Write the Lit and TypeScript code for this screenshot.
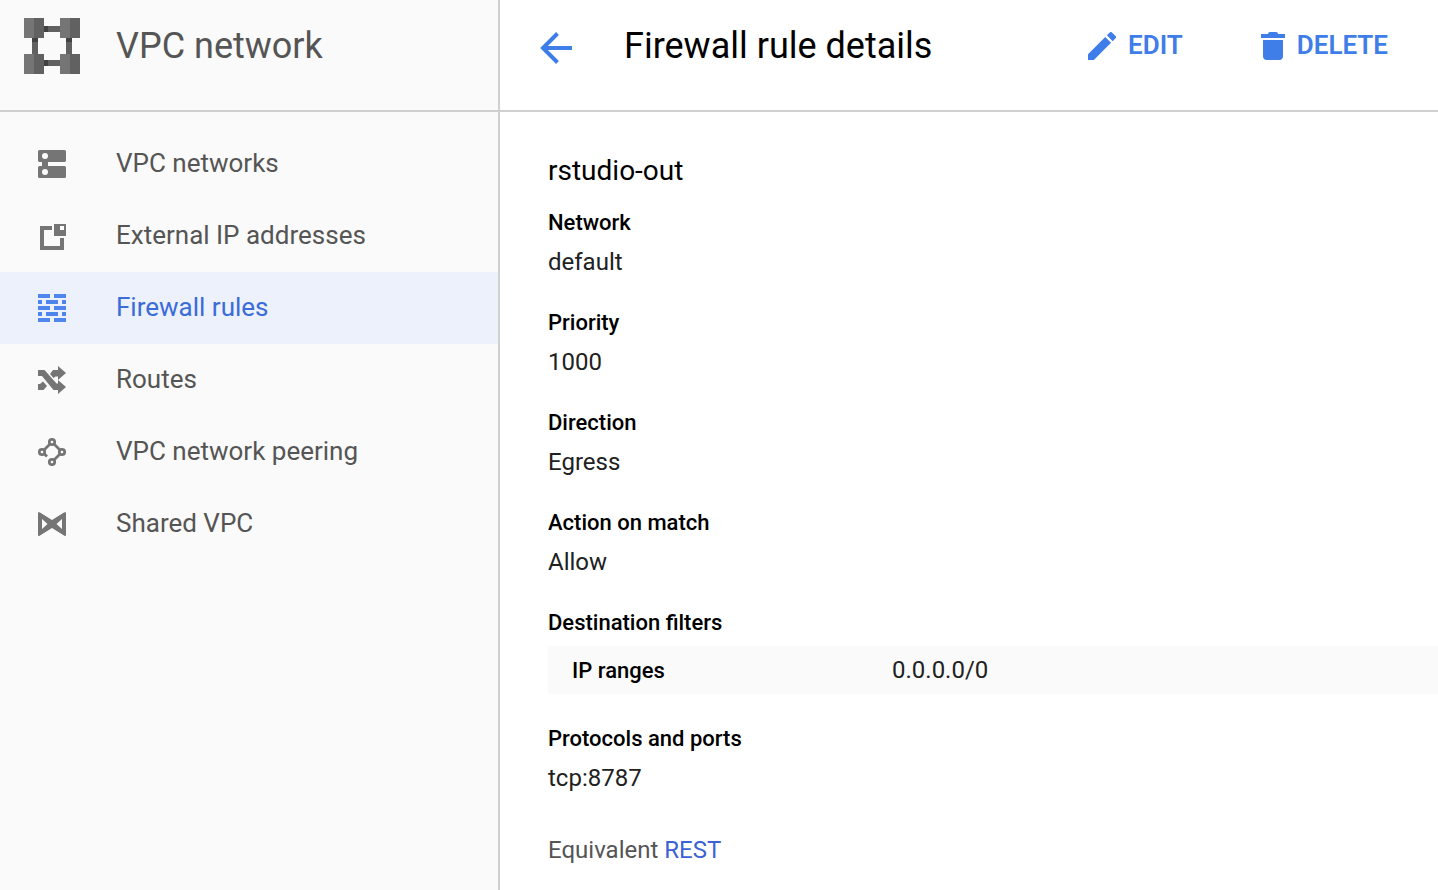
import { LitElement, html, css, svg } from "lit";
import { customElement, state } from "lit/decorators.js";

const navItems = [
  {
    label: "VPC networks",
    icon: svg`<path fill-rule="evenodd" d="M1.5 0h25A1.5 1.5 0 0 1 28 1.500v9a1.500 1.500 0 0 1-1.500 1.500H10v4h16.500A1.500 1.500 0 0 1 28 17.500v9a1.500 1.500 0 0 1-1.500 1.500h-25A1.500 1.500 0 0 1 0 26.500v-9A1.500 1.500 0 0 1 1.500 16H4v-4H1.500A1.500 1.500 0 0 1 0 10.500v-9A1.500 1.500 0 0 1 1.500 0zM7 3a3 3 0 1 0 0 6a3 3 0 0 0 0-6zM7 19a3 3 0 1 0 0 6a3 3 0 0 0 0-6z"/>`,
  },
  {
    label: "External IP addresses",
    icon: svg`<path fill-rule="evenodd" d="M2 4h12v4H6v16h16v-8h4v12H2zM16 2h12v12H16zM22 4v4h4V4z"/>`,
  },
  {
    label: "Firewall rules",
    icon: svg`<path d="M0 0h12v4H0zM16 0h12v4H16zM0 6h4v4H0zM8 6h12v4H8zM24 6h4v4h-4zM0 12h12v4H0zM16 12h12v4H16zM0 18h4v4H0zM8 18h12v4H8zM24 18h4v4h-4zM0 24h12v4H0zM16 24h12v4H16z"/>`,
  },
  {
    label: "Routes",
    icon: svg`<path d="M0 4h6.500L18.500 17.500H20V14L28 21l-8 7v-4h-4.500L4 10H0zM20 0l8 7l-8 7v-3.500h-2.500L15.500 12L12 8l3-4h5zM0 18h2L5 15.500L9 20L5.500 24H0z"/>`,
  },
  {
    label: "VPC network peering",
    icon: svg`<g fill="none" stroke="currentColor" stroke-width="2.700"><circle cx="14" cy="4" r="2.700"/><circle cx="4" cy="14" r="2.700"/><circle cx="24" cy="14" r="2.700"/><circle cx="14" cy="24" r="2.700"/><path d="M6 12l6-6M16 6l6 6M22 16l-6 6M6 15.500l3 3"/></g>`,
  },
  {
    label: "Shared VPC",
    icon: svg`<path fill-rule="evenodd" d="M0 3.500Q0 1 2 2.500L14 10L26 2.500Q28 1 28 3.500v21Q28 27 26 25.500L14 18L2 25.500Q0 27 0 24.500zM4 9v10L9.500 14zM24 9v10L18.500 14z"/>`,
  },
];

const fields = [
  ["Network", "default"],
  ["Priority", "1000"],
  ["Direction", "Egress"],
  ["Action on match", "Allow"],
];

@customElement("app-root")
export class AppRoot extends LitElement {
  @state() private selected = "Firewall rules";

  static styles = css`
    :host {
      display: grid;
      grid-template-columns: 500px minmax(0, 1fr);
      min-height: 100vh;
      background: #fff;
      color: #212121;
      font: 24px/32px Roboto, sans-serif;
    }
    * { box-sizing: border-box; }
    svg { display: block; flex: none; fill: currentColor; }
    h1, h2, p, dl, dd, ul { margin: 0; padding: 0; }
    a { text-decoration: none; }
    .sidebar { background: #fafafa; border-right: 2px solid #d0d0d0; }
    .bar {
      display: flex;
      align-items: flex-start;
      height: 112px;
      border-bottom: 2px solid #d0d0d0;
    }
    .product { padding: 18px 24px; gap: 36px; color: #555; }
    .title { font-size: 36px; line-height: 56px; font-weight: 400; }
    .nav { list-style: none; padding: 16px 0; }
    .item {
      display: flex;
      align-items: center;
      gap: 50px;
      height: 72px;
      padding: 0 38px;
      color: #555;
      font-size: 26px;
    }
    .item svg { color: #757575; }
    .item.active { background: #ecf1fb; color: #3b6cd8; }
    .item.active svg { color: #5086ec; }
    .label { padding-bottom: 2px; }
    .toolbar { padding: 18px 50px 0 40px; color: #000; }
    .button {
      display: flex;
      align-items: center;
      gap: 12px;
      height: 56px;
      padding: 0;
      border: 0;
      background: none;
      color: #3f7de8;
      font: 600 26px/32px Roboto, sans-serif;
      cursor: pointer;
    }
    .back { margin-right: 52px; padding-top: 4px; }
    .actions { display: flex; gap: 78px; margin-left: auto; }
    .content { padding: 40px 0 24px 48px; }
    .name { margin-bottom: 15px; color: #000; font-size: 28px; line-height: 38px; font-weight: 400; }
    .field { margin-bottom: 22px; }
    .key { color: #000; font-size: 22px; line-height: 36px; font-weight: 500; }
    .value { line-height: 42px; }
    .filters { width: 100%; margin: 5px 0 27px; border-collapse: collapse; background: #fafafa; }
    .filters th, .filters td { height: 48px; padding: 0; text-align: left; }
    .filters th { width: 344px; padding: 2px 0 0 24px; }
    .rest { padding-top: 13px; color: #555; }
    .rest a { color: #3b62d4; }
  `;

  render() {
    return html`
      <aside class="sidebar">
        <div class="bar product">
          <svg width="56" height="56" viewBox="0 0 56 56" aria-hidden="true">
            <path fill="#616161" d="M20 8h16v6H20zM20 42h16v6H20zM8 20h6v16H8zM42 20h6v16h-6zM10 0h10v20H10zM46 0h10v20H46zM10 36h10v20H10zM46 36h10v20H46z"/>
            <path fill="#424242" d="M20 8h4v6h-4zM20 42h4v6h-4zM8 20h6v4H8zM42 20h6v4h-6z"/>
            <path fill="#757575" d="M0 0h10v20H0zM36 0h10v20H36zM0 36h10v20H0zM36 36h10v20H36z"/>
          </svg>
          <h2 class="title">VPC network</h2>
        </div>
        <nav aria-label="VPC network">
          <ul class="nav">
            ${navItems.map(
              (item) => html`<li>
                <a
                  href="#"
                  class="item ${item.label === this.selected ? "active" : ""}"
                  @click=${(e: Event) => {
                    e.preventDefault();
                    this.selected = item.label;
                  }}
                  ><svg width="28" height="28" viewBox="0 0 28 28" aria-hidden="true">${item.icon}</svg
                  ><span class="label">${item.label}</span></a
                >
              </li>`
            )}
          </ul>
        </nav>
      </aside>
      <main>
        <header class="bar toolbar">
          <button class="button back" aria-label="Back">
            <svg width="32" height="32" viewBox="0 0 32 32" aria-hidden="true">
              <path fill="none" stroke="currentColor" stroke-width="4" d="M32 16H3M17.500 1.500L3 16l14.500 14.500"/>
            </svg>
          </button>
          <h1 class="title">Firewall rule details</h1>
          <div class="actions">
            <button class="button">
              <svg width="28" height="28" viewBox="3 3 18 18" aria-hidden="true">
                <path d="M3 17.250V21h3.750L17.810 9.940l-3.750-3.750L3 17.250zM20.710 7.040a1 1 0 0 0 0-1.410l-2.340-2.340a1 1 0 0 0-1.410 0l-1.830 1.830 3.750 3.750 1.830-1.830z"/>
              </svg>
              <span class="label">EDIT</span>
            </button>
            <button class="button">
              <svg width="24" height="28" viewBox="2 0 24 28" aria-hidden="true">
                <path d="M4 8h20v16q0 4-4 4H8q-4 0-4-4zM2 2h7q0-2 2-2h6q2 0 2 2h7v4H2z"/>
              </svg>
              <span class="label">DELETE</span>
            </button>
          </div>
        </header>
        <section class="content">
          <h2 class="name">rstudio-out</h2>
          <dl>
            ${fields.map(
              ([key, value]) => html`<div class="field">
                <dt class="key">${key}</dt>
                <dd class="value">${value}</dd>
              </div>`
            )}
            <div class="field">
              <dt class="key">Destination filters</dt>
              <dd>
                <table class="filters">
                  <tr><th class="key" scope="row">IP ranges</th><td>0.0.0.0/0</td></tr>
                </table>
              </dd>
            </div>
            <div class="field">
              <dt class="key">Protocols and ports</dt>
              <dd class="value">tcp:8787</dd>
            </div>
          </dl>
          <p class="rest">Equivalent <a href="#">REST</a></p>
        </section>
      </main>
    `;
  }
}
